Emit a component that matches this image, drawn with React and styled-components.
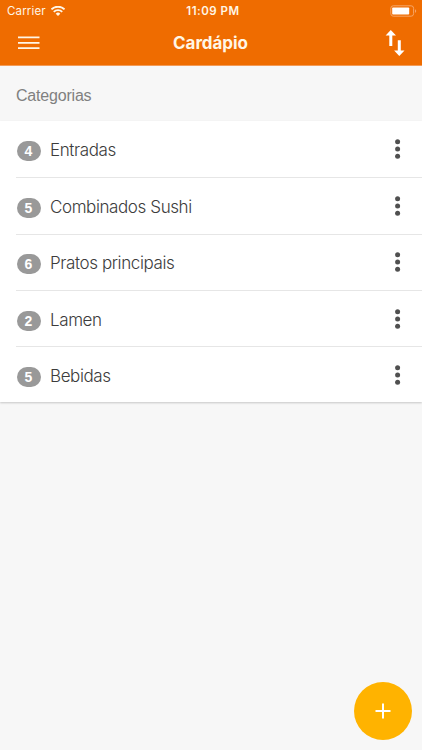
import { styled, createGlobalStyle } from 'styled-components';

const GlobalStyle = createGlobalStyle`
  * {
    box-sizing: border-box;
  }
  body {
    margin: 0;
    background-color: #f7f7f7;
    font-family: 'Liberation Sans', Arial, sans-serif;
  }
`;

const Screen = styled.div`
  position: relative;
  display: flex;
  flex-direction: column;
  width: 100%;
  height: 100vh;
  overflow: hidden;
  background-color: #f7f7f7;
`;

const Header = styled.header`
  height: 66px;
  flex-shrink: 0;
  color: #fff6e6;
  background-color: #ef6c00;
  border-bottom: 1px solid #f39b57;
`;

const StatusBar = styled.div`
  display: grid;
  grid-template-columns: 1fr auto 1fr;
  align-items: center;
  height: 22px;
  padding: 0 5px 0 7px;
  font-family: Inter, sans-serif;
  font-size: 11.5px;
  line-height: 22px;
`;

const Carrier = styled.div`
  display: flex;
  align-items: center;
  gap: 5px;
  letter-spacing: 0.15px;
`;

const Time = styled.div`
  padding-left: 2px;
  font-weight: 600;
  font-size: 11.5px;
  letter-spacing: 0.5px;
`;

const BatteryIcon = styled.svg`
  justify-self: end;
`;

const NavBar = styled.div`
  display: grid;
  grid-template-columns: 1fr auto 1fr;
  align-items: center;
  height: 41px;
  padding: 0 17px 0 18px;
`;

const Title = styled.h1`
  margin: 0;
  padding: 2px 2px 0 0;
  font-family: Inter, sans-serif;
  font-size: 17px;
  line-height: 39px;
  font-weight: 700;
  letter-spacing: -0.05px;
`;

const IconButton = styled.button`
  display: flex;
  padding: 0;
  border: none;
  background: none;
  color: inherit;
  cursor: pointer;
  justify-self: ${({ $align }) => $align || 'start'};
`;

const SectionTitle = styled.h2`
  display: flex;
  align-items: center;
  height: 55px;
  flex-shrink: 0;
  margin: 0;
  padding: 5px 16px 0;
  font-size: 16px;
  font-weight: 400;
  letter-spacing: -0.2px;
  color: #808080;
`;

const List = styled.ul`
  margin: 0;
  padding: 0 0 0 16px;
  list-style: none;
  background-color: #fff;
  box-shadow: 0 1px 2px rgba(0, 0, 0, 0.2);
`;

const Row = styled.li`
  display: flex;
  align-items: center;
  height: 56.3px;
  padding: 0 21px 0 0;
  & + & {
    border-top: 1px solid #e6e6e6;
  }
`;

const Badge = styled.span`
  width: 24px;
  height: 20px;
  margin: 4px 0 0 0.5px;
  border-radius: 10px;
  font-size: 14px;
  font-weight: 700;
  line-height: 20px;
  text-align: center;
  color: #fff;
  background-color: #999;
`;

const Name = styled.span`
  flex: 1;
  margin: 2px 0 0 9.5px;
  font-family: Inter, 'Liberation Sans', sans-serif;
  font-size: 17px;
  font-weight: 300;
  letter-spacing: -0.4px;
  color: #3c3c3c;
`;

const FabButton = styled.button`
  position: absolute;
  right: 10px;
  bottom: 10px;
  display: flex;
  align-items: center;
  justify-content: center;
  width: 58px;
  height: 58px;
  padding: 0;
  border: none;
  border-radius: 50%;
  background-color: #ffb300;
  cursor: pointer;
`;

const categories = [
  { name: 'Entradas', count: 4 },
  { name: 'Combinados Sushi', count: 5 },
  { name: 'Pratos principais', count: 6 },
  { name: 'Lamen', count: 2 },
  { name: 'Bebidas', count: 5 },
];

function WifiIcon() {
  return (
    <svg width="14" height="11" viewBox="0 0 14 11" fill="none" stroke="currentColor" strokeWidth="1.9">
      <path d="M0.5 3.4a9.2 9.2 0 0 1 13 0" />
      <path d="M2.8 5.9a5.9 5.9 0 0 1 8.4 0" />
      <path d="M4.7 7.7a3.2 3.2 0 0 1 4.6 0L7 10z" fill="currentColor" stroke="none" />
    </svg>
  );
}

function Battery() {
  return (
    <BatteryIcon width="27" height="12" viewBox="0 0 27 12">
      <rect x="0.8" y="0.8" width="22.8" height="10.4" rx="2.5" fill="none" stroke="#f7a566" />
      <rect x="2.2" y="2.4" width="17" height="7.2" rx="0.8" fill="#fff" />
      <path d="M25 4.2c1.6.5 1.6 3.1 0 3.6z" fill="#f7a566" />
    </BatteryIcon>
  );
}

function MenuIcon() {
  return (
    <svg width="22" height="14" viewBox="0 0 22 14" fill="none" stroke="currentColor" strokeWidth="1.7">
      <path d="M0 1.3h21.5M0 6.8h21.5M0 12.1h21.5" />
    </svg>
  );
}

function SortIcon() {
  return (
    <svg width="20" height="26" viewBox="0 0 20 26" fill="#fff">
      <path d="M5.8 0l5.2 5.6H7.3V16H4.3V5.6H0.6z" />
      <path d="M14.3 26l-5.2-5.6h3.7V10.2h3v10.2h3.7z" />
    </svg>
  );
}

function MoreIcon() {
  return (
    <svg width="6" height="20" viewBox="0 0 6 20" fill="#505050">
      <circle cx="2.6" cy="2.8" r="2.5" />
      <circle cx="2.6" cy="10" r="2.5" />
      <circle cx="2.6" cy="17.2" r="2.5" />
    </svg>
  );
}

function App() {
  return (
    <>
      <GlobalStyle />
      <Screen>
        <Header>
          <StatusBar>
            <Carrier>
              Carrier
              <WifiIcon />
            </Carrier>
            <Time>11:09 PM</Time>
            <Battery />
          </StatusBar>
          <NavBar>
            <IconButton type="button" aria-label="Menu">
              <MenuIcon />
            </IconButton>
            <Title>Cardápio</Title>
            <IconButton type="button" aria-label="Ordenar" $align="end">
              <SortIcon />
            </IconButton>
          </NavBar>
        </Header>
        <SectionTitle>Categorias</SectionTitle>
        <List>
          {categories.map(({ name, count }) => (
            <Row key={name}>
              <Badge>{count}</Badge>
              <Name>{name}</Name>
              <IconButton type="button" aria-label="Mais">
                <MoreIcon />
              </IconButton>
            </Row>
          ))}
        </List>
        <FabButton type="button" aria-label="Adicionar">
          <svg width="16" height="16" viewBox="0 0 16 16" fill="none" stroke="#fff" strokeWidth="2">
            <path d="M8 0.5v15M0.5 8h15" />
          </svg>
        </FabButton>
      </Screen>
    </>
  );
}

export default App;
